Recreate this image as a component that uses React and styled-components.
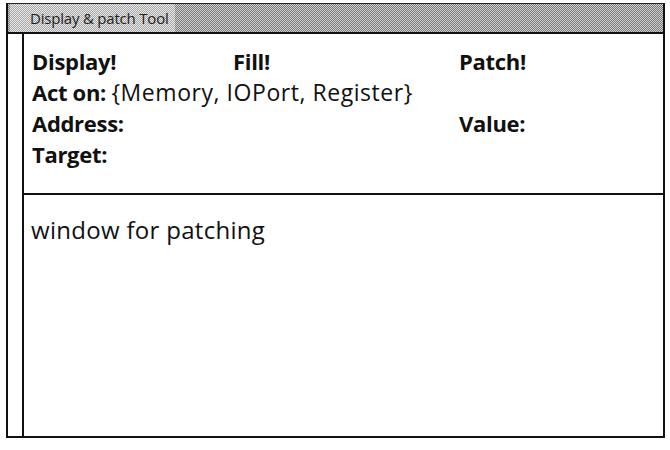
import React from 'react';
import styled, { createGlobalStyle } from 'styled-components';

const GlobalStyle = createGlobalStyle`
  html, body {
    margin: 0;
    padding: 0;
    background: #ffffff;
  }
  body {
    font-family: "Open Sans", "Noto Sans", sans-serif;
    color: #111111;
  }
`;

// 1-bit dither used by the title bar
const dither = (dark, light) =>
  `repeating-conic-gradient(${dark} 0 25%, ${light} 0 50%) 0 0 / 2px 2px`;

const Page = styled.div`
  width: 670px;
  height: 450px;
  padding: 3px 5px 12px 6px;
  box-sizing: border-box;
`;

const Window = styled.div`
  display: flex;
  flex-direction: column;
  height: 100%;
  border-left: 2px solid #111;
  border-right: 2px solid #111;
  border-bottom: 2px solid #111;
  box-sizing: border-box;
`;

const TitleBar = styled.div`
  display: flex;
  align-items: center;
  height: 31px;
  border-top: 1px solid #222;
  border-bottom: 2px solid #111;
  background: ${dither('#7a7a7a', '#cfcfcf')};
  box-sizing: border-box;
`;

const TitleLabel = styled.div`
  display: flex;
  align-items: center;
  height: 100%;
  padding: 0 6px 0 20px;
  margin-left: 2px;
  background: ${dither('#a8a8a8', '#e8e8e8')};
  font-size: 15px;
  color: #222;
  letter-spacing: -0.2px;
`;

const Body = styled.div`
  flex: 1;
  display: flex;
`;

const ScrollGutter = styled.div`
  width: 14px;
  border-right: 2px solid #111;
`;

const Panes = styled.div`
  flex: 1;
  display: flex;
  flex-direction: column;
`;

const FormPane = styled.div`
  height: 161px;
  padding: 11px 0 0 8px;
  border-bottom: 2px solid #111;
  box-sizing: border-box;
`;

const Row = styled.div`
  display: grid;
  grid-template-columns: ${(p) => p.$cols || '1fr'};
  height: 31px;
  align-items: center;
  font-size: 22px;
  white-space: nowrap;
`;

const Command = styled.span`
  font-weight: 700;
  letter-spacing: -0.3px;
`;

const Field = styled.span`
  font-weight: 700;
  letter-spacing: -0.3px;
`;

const Choices = styled.span`
  font-weight: 400;
  font-size: 23px;
  letter-spacing: 0.55px;
`;

const TextPane = styled.div`
  flex: 1;
  padding: 19px 0 0 7px;
  font-size: 24px;
  line-height: 32px;
  letter-spacing: 0.3px;
`;

export default function App() {
  return (
    <>
      <GlobalStyle />
      <Page>
        <Window>
          <TitleBar>
            <TitleLabel>Display &amp; patch Tool</TitleLabel>
          </TitleBar>
          <Body>
            <ScrollGutter />
            <Panes>
              <FormPane>
                <Row $cols="201px 226px 1fr">
                  <Command>Display!</Command>
                  <Command>Fill!</Command>
                  <Command>Patch!</Command>
                </Row>
                <Row>
                  <span>
                    <Field>Act on: </Field>
                    <Choices>{'{Memory, IOPort, Register}'}</Choices>
                  </span>
                </Row>
                <Row $cols="427px 1fr">
                  <Field>Address:</Field>
                  <Field>Value:</Field>
                </Row>
                <Row>
                  <Field>Target:</Field>
                </Row>
              </FormPane>
              <TextPane>window for patching</TextPane>
            </Panes>
          </Body>
        </Window>
      </Page>
    </>
  );
}
